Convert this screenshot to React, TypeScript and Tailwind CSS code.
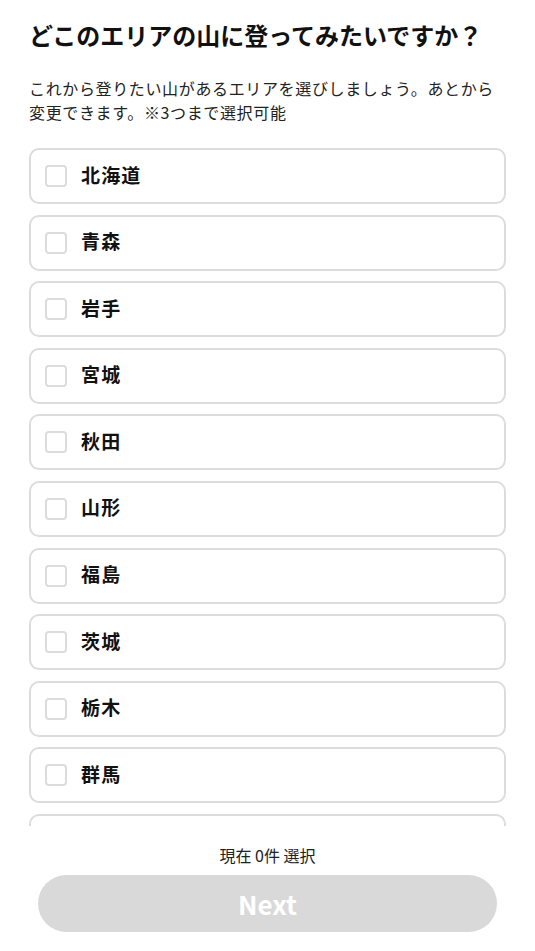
import React, { useState } from 'react';

const areas = ['北海道', '青森', '岩手', '宮城', '秋田', '山形', '福島', '茨城', '栃木', '群馬', '埼玉', '千葉', '東京', '神奈川'];

const font = { fontFamily: '"Noto Sans CJK JP", "Noto Sans", sans-serif' };

export default function App() {
  const [selected, setSelected] = useState<string[]>([]);

  const toggle = (name: string) => {
    setSelected((prev) =>
      prev.includes(name) ? prev.filter((n) => n !== name) : prev.length >= 3 ? prev : [...prev, name]
    );
  };

  return (
    <div className="h-screen flex flex-col bg-white text-[#111] px-[29px]" style={font}>
      <h1 className="pt-[17px] text-[24px] leading-[36px] font-bold">どこのエリアの山に登ってみたいですか？</h1>
      <p className="mt-[23px] text-[16px] leading-[24px] tracking-[0.04em] text-[#222]">
        これから登りたい山があるエリアを選びしましょう。あとから変更できます。※3つまで選択可能
      </p>

      <div className="mt-[24px] flex-1 min-h-0 overflow-hidden">
        <div className="flex flex-col gap-[10.6px]">
          {areas.map((name) => {
            const on = selected.includes(name);
            return (
              <button
                key={name}
                onClick={() => toggle(name)}
                className="h-[56px] shrink-0 flex items-center gap-[14px] px-[14px] border-2 border-[#dcdcdc] rounded-[10px] text-left"
              >
                <span
                  className={`w-[22px] h-[22px] border-2 rounded-[4px] shrink-0 ${on ? 'bg-[#333] border-[#333]' : 'border-[#dcdcdc]'}`}
                />
                <span className="pb-[4px] text-[19px] tracking-[0.06em] font-bold leading-none">{name}</span>
              </button>
            );
          })}
        </div>
      </div>

      <div className="pt-[17px] pb-[19px] flex flex-col items-center">
        <p className="text-[16px] leading-[24px] text-[#222]">現在 {selected.length}件 選択</p>
        <button
          disabled={selected.length === 0}
          className="mt-[8px] self-stretch mx-[9px] h-[57px] rounded-full bg-[#d9d9d9] text-white text-[26px] font-bold"
        >
          Next
        </button>
      </div>
    </div>
  );
}
